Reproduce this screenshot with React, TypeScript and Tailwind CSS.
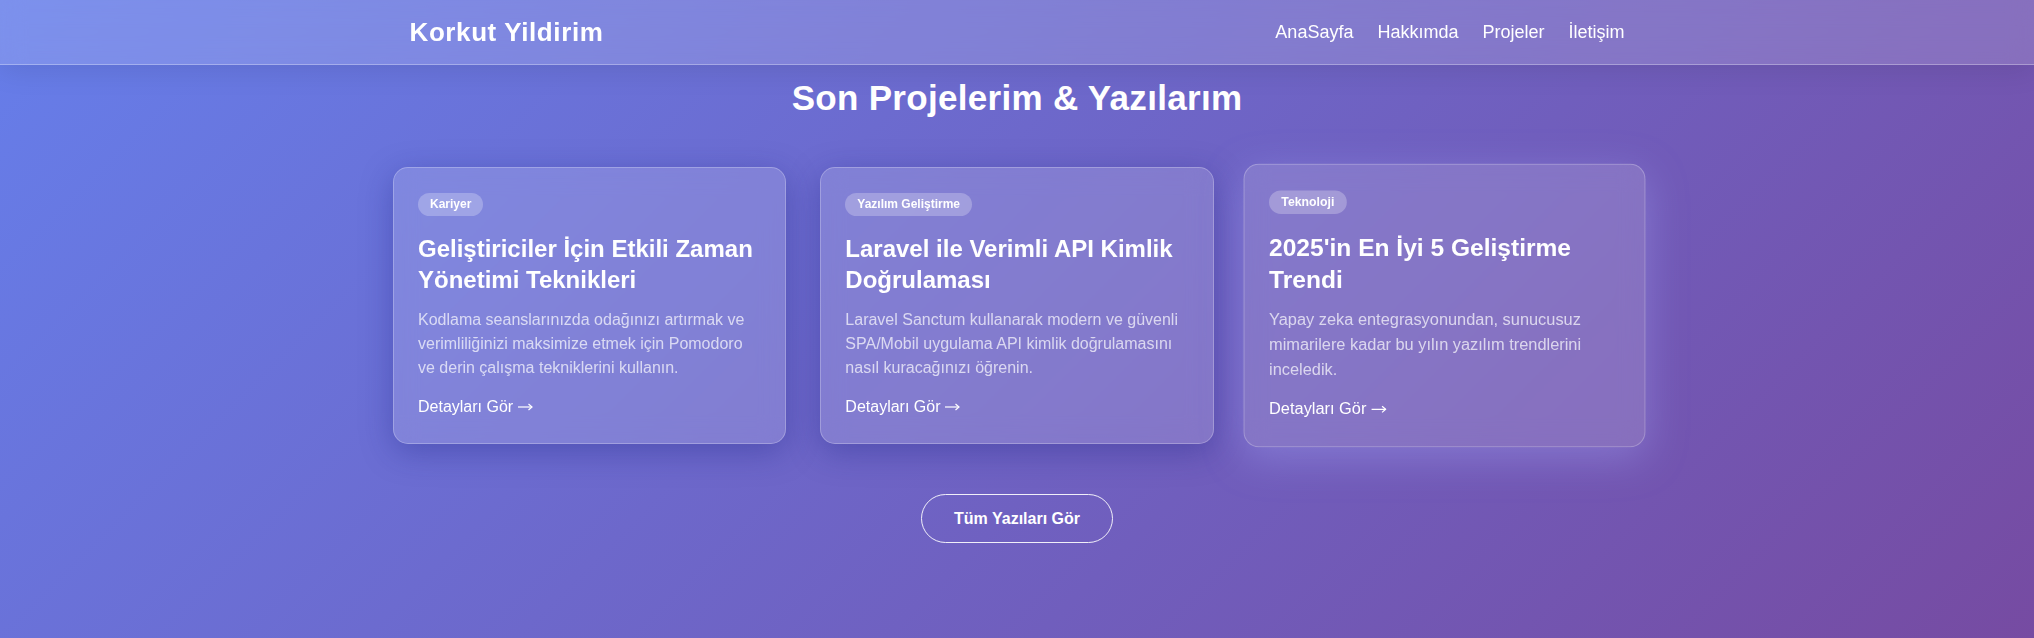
import React from 'react';

interface Post {
  tag: string;
  title: string;
  excerpt: string;
  hovered?: boolean;
}

const POSTS: Post[] = [
  {
    tag: 'Kariyer',
    title: 'Geliştiriciler İçin Etkili Zaman Yönetimi Teknikleri',
    excerpt:
      'Kodlama seanslarınızda odağınızı artırmak ve verimliliğinizi maksimize etmek için Pomodoro ve derin çalışma tekniklerini kullanın.',
  },
  {
    tag: 'Yazılım Geliştirme',
    title: 'Laravel ile Verimli API Kimlik Doğrulaması',
    excerpt:
      'Laravel Sanctum kullanarak modern ve güvenli SPA/Mobil uygulama API kimlik doğrulamasını nasıl kuracağınızı öğrenin.',
  },
  {
    tag: 'Teknoloji',
    title: "2025'in En İyi 5 Geliştirme Trendi",
    excerpt:
      'Yapay zeka entegrasyonundan, sunucusuz mimarilere kadar bu yılın yazılım trendlerini inceledik.',
    hovered: true,
  },
];

const NAV = ['AnaSayfa', 'Hakkımda', 'Projeler', 'İletişim'];

function Arrow() {
  return (
    <svg width="15" height="8" viewBox="0 0 15 8" className="ml-[5px] inline-block align-[1px]" fill="none" stroke="currentColor" strokeWidth="1.2">
      <path d="M0 4h14" />
      <path d="M10.5 1l3.5 3-3.5 3" />
    </svg>
  );
}

function PostCard({ post }: { post: Post }) {
  return (
    <article
      className={`flex flex-col rounded-[15px] border border-white/25 bg-white/15 px-6 pt-[25px] pb-6 backdrop-blur-md ${
        post.hovered
          ? 'scale-[1.023] shadow-[0_10px_40px_rgba(170,175,255,0.35)]'
          : 'shadow-[0_8px_32px_rgba(31,38,135,0.37)]'
      }`}
    >
      <span className="mb-[17px] self-start rounded-full bg-white/25 px-3 py-1 text-[12px] font-bold leading-[15px] text-white">
        {post.tag}
      </span>
      <h3 className="mb-[13px] text-[24px] font-bold leading-[31px] text-white">{post.title}</h3>
      <p className="mb-[15px] text-[16px] leading-6 text-white/70">{post.excerpt}</p>
      <a href="#" className="self-start text-[16px] leading-6 text-white">
        Detayları Gör
        <Arrow />
      </a>
    </article>
  );
}

export default function App() {
  return (
    <div className="min-h-screen w-full bg-[linear-gradient(135deg,#667eea_0%,#764ba2_100%)] font-['Liberation_Sans',Arial,sans-serif] text-white">
      <header className="h-[65px] border-b border-white/30 bg-white/15 shadow-[0_4px_30px_rgba(0,0,0,0.1)] backdrop-blur-md">
        <div className="mx-auto flex h-full w-[1215px] items-center justify-between">
          <div className="text-[26px] font-bold tracking-[0.6px]">Korkut Yildirim</div>
          <nav className="flex gap-6 text-[18px]">
            {NAV.map((item) => (
              <a key={item} href="#" className="text-white">
                {item}
              </a>
            ))}
          </nav>
        </div>
      </header>

      <section className="flex flex-col items-center">
        <h2 className="mt-[13px] text-[35px] font-bold leading-[40px] tracking-[0.3px]">
          Son Projelerim &amp; Yazılarım
        </h2>

        <div className="mt-[49px] grid w-[1248px] grid-cols-3 gap-[34px]">
          {POSTS.map((p) => (
            <PostCard key={p.tag} post={p} />
          ))}
        </div>

        <a
          href="#"
          className="mt-[50px] flex h-[49px] items-center rounded-full border border-white/90 px-8 text-[16px] font-bold"
        >
          Tüm Yazıları Gör
        </a>
      </section>
    </div>
  );
}
